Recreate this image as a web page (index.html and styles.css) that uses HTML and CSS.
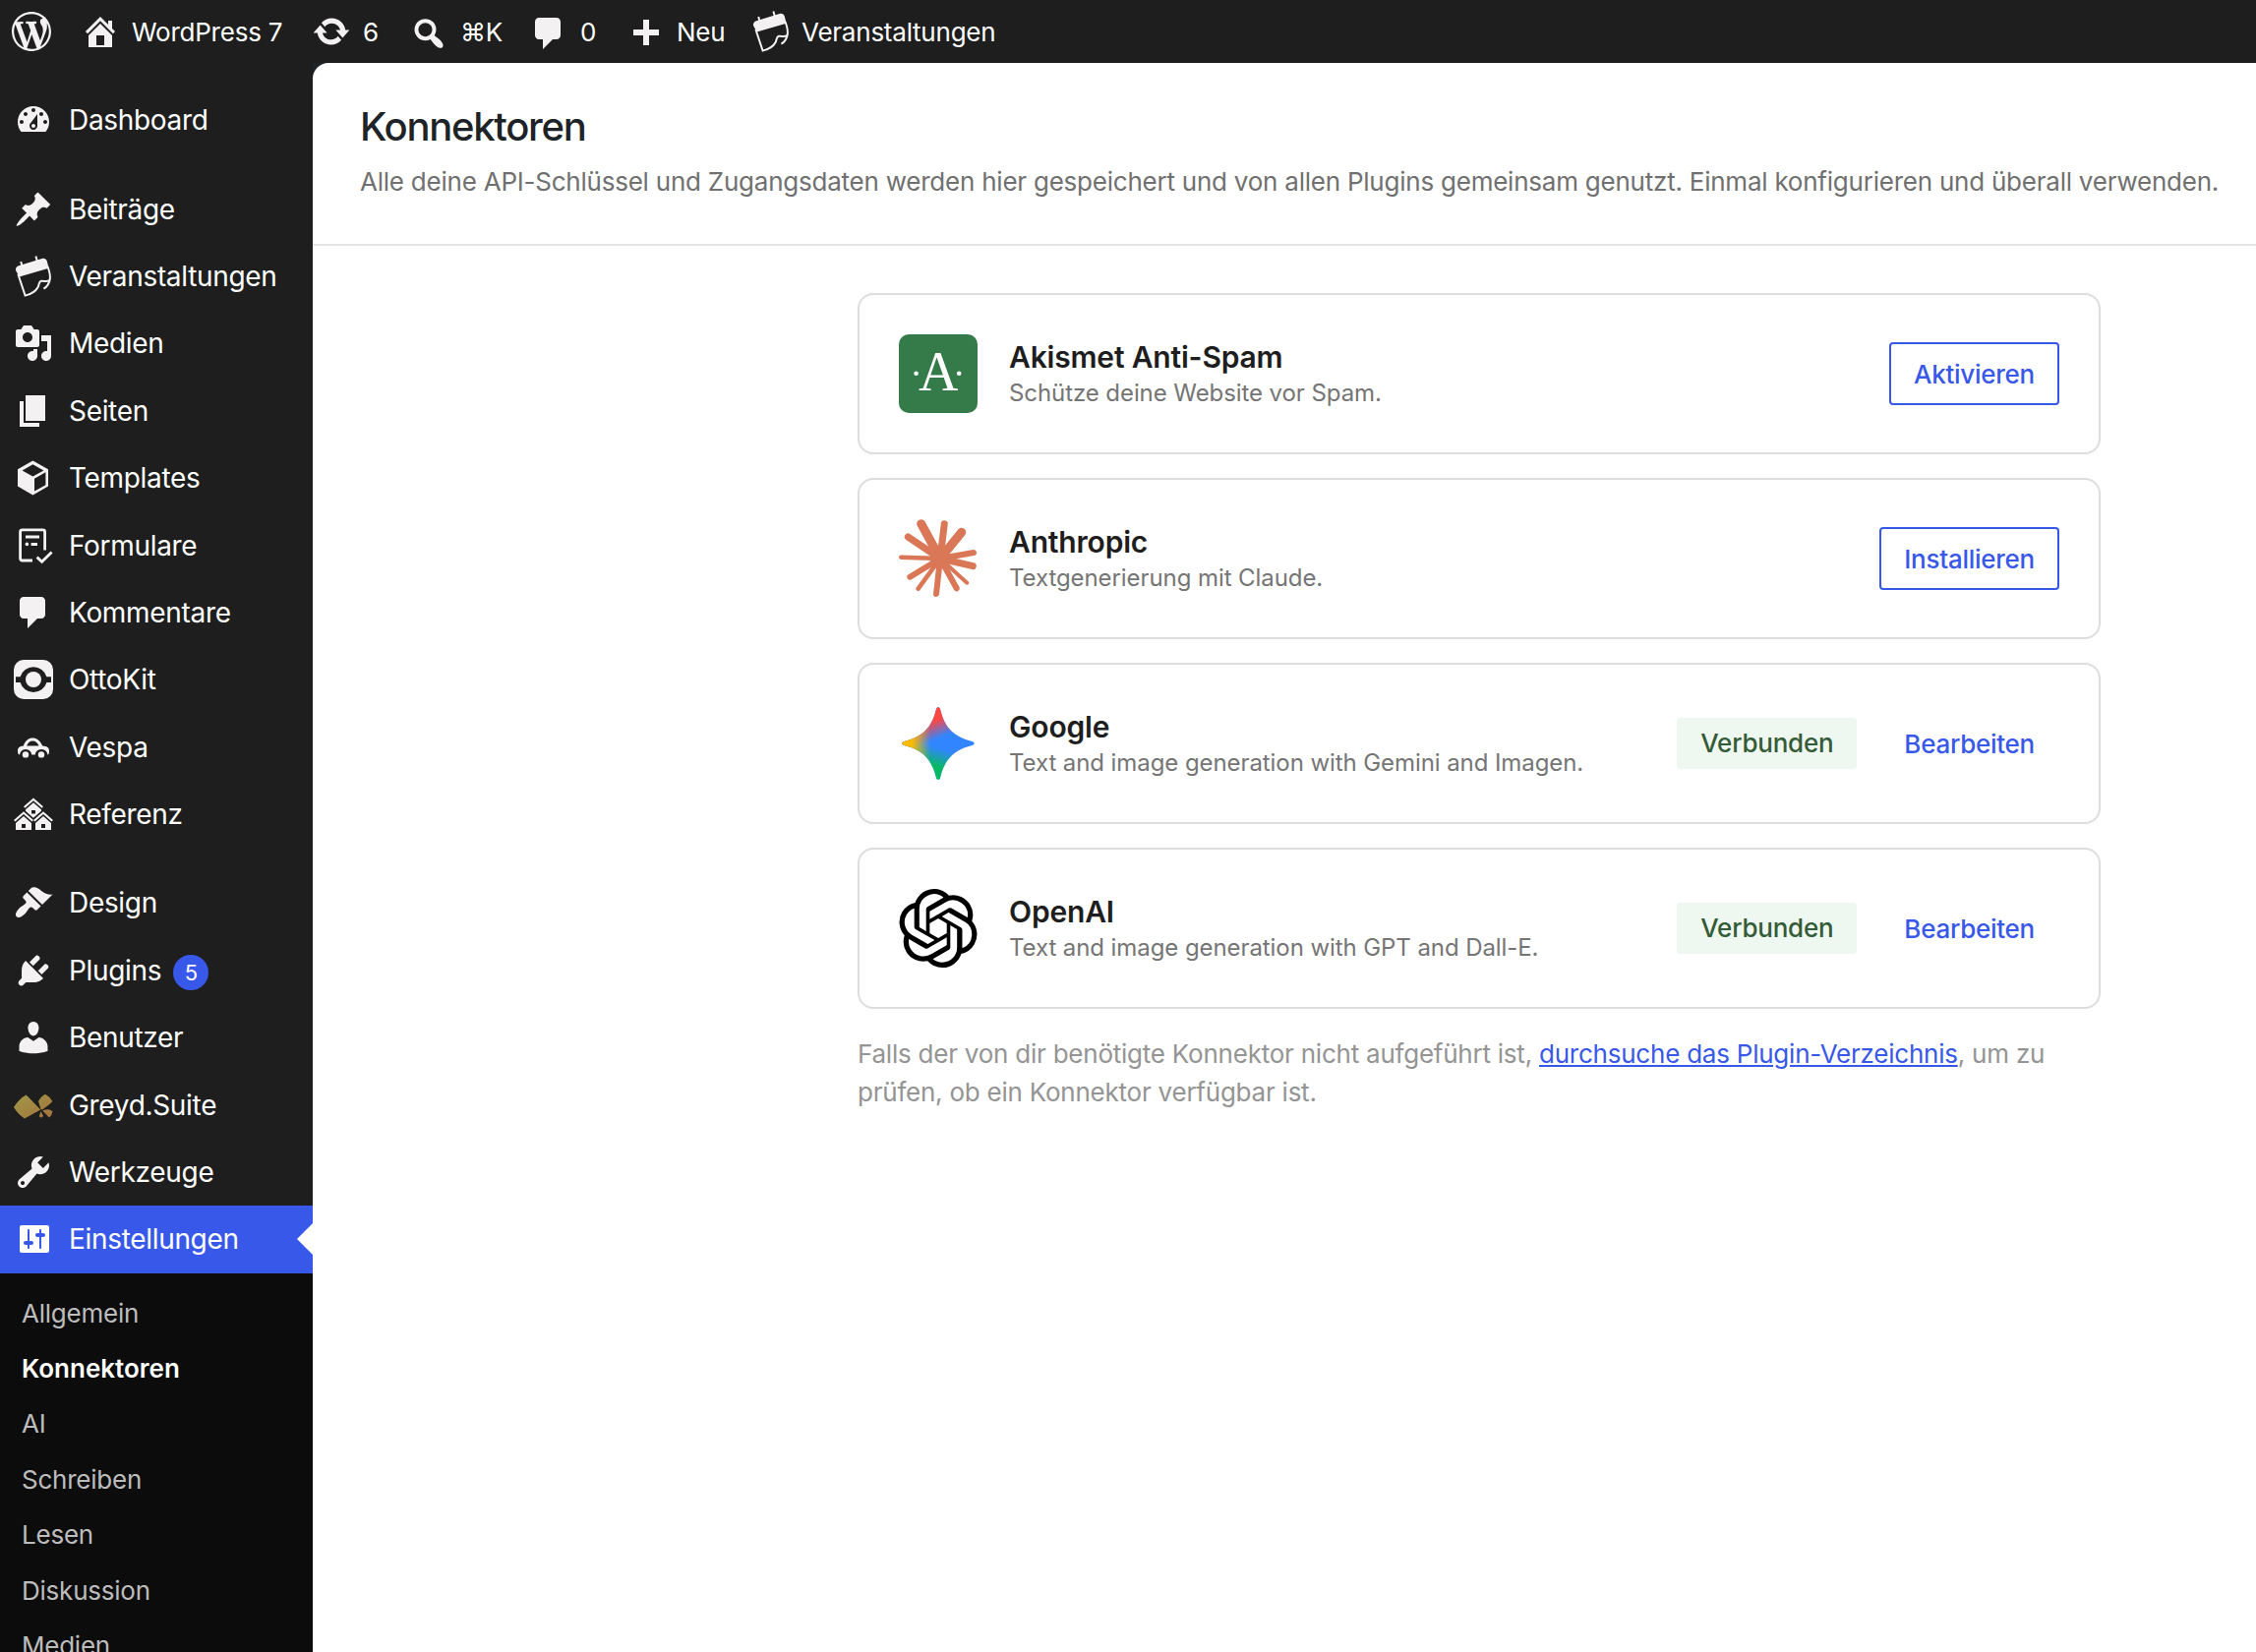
FILE: index.html
```html
<!DOCTYPE html>
<html lang="de">
<head>
  <meta charset="UTF-8">
  <meta name="viewport" content="width=device-width, initial-scale=1.0">
  <title>Konnektoren</title>
  <link rel="stylesheet" href="styles.css">
</head>
<body>
  <!-- Shared icons -->
  <svg class="sprite">
    <symbol id="calendar" viewBox="0 0 20 20" overflow="visible">
      <path d="M1 7C.8 6 1.300 5 2.500 4.600L14.300 1c1.300-.4 2.200.1 2.600 1.300L17.800 5.900 2.800 10.200z"/>
      <path d="M3.600 2.500L4.300 5M11.200-.3l.7 2.500M2.200 9l3.600 10.800c3.200-.8 5.200-1.800 6.500-4.300.7-1.700.4-2.700 1.700-3.100 1.500-.3 3 .9 4.300-.6.5-2.300-.3-4.800-1.100-6.800M18.500 11c-.5 3-1.700 4.500-3.300 5.300" fill="none" stroke="currentColor"/>
    </symbol>
    <symbol id="comment" viewBox="0 0 20 20">
      <path d="M5 2h9c1.100 0 2 .9 2 2v7c0 1.100-.9 2-2 2h-2l-5 5v-5H5c-1.100 0-2-.9-2-2V4c0-1.100.9-2 2-2z"/>
    </symbol>
  </svg>

  <!-- Admin bar -->
  <header class="admin-bar">
    <a class="bar-item bar-logo"><svg class="icon" viewBox="0 0 20 20"><path d="M20 10c0-5.510-4.490-10-10-10C4.480 0 0 4.490 0 10c0 5.520 4.480 10 10 10 5.510 0 10-4.480 10-10zM7.780 15.370L4.370 6.220c.55-.02 1.170-.08 1.170-.08.5-.06.44-1.130-.06-1.110 0 0-1.450.11-2.370.11-.18 0-.37 0-.58-.01C4.120 2.690 6.870 1.110 10 1.110c2.330 0 4.450.87 6.050 2.340-.68-.11-1.650.39-1.650 1.580 0 .74.45 1.360.9 2.100.35.61.55 1.360.55 2.460 0 1.490-1.400 5-1.400 5l-3.030-8.370c.54-.02.82-.17.82-.17.5-.05.44-1.250-.06-1.220 0 0-1.440.12-2.380.12-.87 0-2.330-.12-2.330-.12-.5-.03-.56 1.200-.06 1.220l.92.08 1.260 3.410zM17.410 10c.24-.64.74-1.870.43-4.250.7 1.290 1.050 2.710 1.050 4.250 0 3.290-1.730 6.240-4.400 7.780.97-2.590 1.940-5.200 2.920-7.780zM6.100 18.090C3.120 16.650 1.110 13.530 1.110 10c0-1.300.23-2.480.72-3.590C3.250 10.300 4.670 14.200 6.100 18.090zm4.030-6.630l2.580 6.980c-.86.29-1.760.45-2.710.45-.79 0-1.570-.11-2.290-.33.81-2.380 1.620-4.740 2.420-7.100z"/></svg></a>
    <a class="bar-item bar-site"><svg class="icon" viewBox="0 0 20 20"><path d="M16 8.500l1.530 1.530-1.060 1.060L10 4.600l-6.470 6.490-1.060-1.060L10 2.500l4 4v-2h2v4zm-6-2.460l6 5.990V18H4v-5.970zM12 17v-5H8v5h4z"/></svg><span>WordPress 7</span></a>
    <a class="bar-item bar-updates"><svg class="icon" viewBox="0 0 20 20"><path d="M10.200 3.280c3.530 0 6.430 2.610 6.920 6h2.080l-3.500 4-3.500-4h2.320c-.45-1.970-2.210-3.450-4.320-3.450-1.450 0-2.730.71-3.540 1.780L4.950 5.660C6.230 4.200 8.110 3.280 10.200 3.280zm-.4 13.440c-3.520 0-6.430-2.610-6.920-6H.8l3.500-4c1.170 1.330 2.330 2.670 3.500 4H5.480c.45 1.970 2.210 3.450 4.320 3.450 1.450 0 2.730-.71 3.540-1.780l1.710 1.950c-1.280 1.460-3.150 2.380-5.250 2.380z"/></svg><span>6</span></a>
    <a class="bar-item bar-search"><svg class="icon" viewBox="0 0 20 20"><path d="M12.140 4.180c1.870 1.870 2.110 4.750.72 6.890.12.1.22.21.36.31.2.16.47.36.81.59.34.24.56.39.66.47.42.31.73.57.94.78.32.32.6.65.84 1 .25.35.44.69.59 1.040.14.35.21.68.18 1-.02.32-.14.59-.36.81s-.49.34-.81.36c-.31.02-.65-.04-.99-.19-.35-.14-.7-.34-1.040-.59-.35-.24-.68-.52-1-.84-.21-.21-.47-.52-.77-.93-.1-.13-.25-.35-.47-.66-.22-.32-.4-.57-.56-.78-.16-.2-.29-.35-.44-.5-2.070 1.090-4.690.76-6.440-.98-2.140-2.150-2.140-5.640 0-7.780 2.150-2.150 5.630-2.150 7.780 0zm-1.410 6.360c1.360-1.370 1.360-3.580 0-4.950-1.370-1.370-3.590-1.370-4.950 0-1.370 1.370-1.370 3.580 0 4.950 1.360 1.370 3.580 1.370 4.950 0z"/></svg><span>⌘K</span></a>
    <a class="bar-item bar-comments"><svg class="icon"><use href="#comment"/></svg><span>0</span></a>
    <a class="bar-item bar-new"><svg class="icon" viewBox="0 0 20 20"><path d="M17 7v3h-5v5H9v-5H4V7h5V2h3v5h5z"/></svg><span>Neu</span></a>
    <a class="bar-item bar-events"><svg class="icon"><use href="#calendar"/></svg><span>Veranstaltungen</span></a>
  </header>

  <div class="layout">
    <!-- Sidebar -->
    <nav class="sidebar">
      <a class="menu-item"><svg class="icon" viewBox="0 0 20 20"><path d="M3.760 16h12.480c1.100-1.370 1.760-3.110 1.760-5 0-4.420-3.580-8-8-8s-8 3.580-8 8c0 1.890.66 3.630 1.760 5zM10 4c.55 0 1 .45 1 1s-.45 1-1 1-1-.45-1-1 .45-1 1-1zM6 6c.55 0 1 .45 1 1s-.45 1-1 1-1-.45-1-1 .45-1 1-1zm8 0c.55 0 1 .45 1 1s-.45 1-1 1-1-.45-1-1 .45-1 1-1zm-5.370 5.550L12 7v6c0 1.100-.9 2-2 2s-2-.9-2-2c0-.57.24-1.080.63-1.450zM4 10c.55 0 1 .45 1 1s-.45 1-1 1-1-.45-1-1 .45-1 1-1zm12 0c.55 0 1 .45 1 1s-.45 1-1 1-1-.45-1-1 .45-1 1-1zm-5 3c0-.55-.45-1-1-1s-1 .45-1 1 .45 1 1 1 1-.45 1-1z"/></svg><span>Dashboard</span></a>
      <div class="separator"></div>
      <a class="menu-item"><svg class="icon" viewBox="0 0 20 20"><path d="M10.440 3.020l1.820-1.820 6.360 6.350-1.830 1.820c-1.050-.68-2.480-.57-3.410.36l-.75.75c-.92.93-1.040 2.350-.35 3.410l-1.830 1.820-2.410-2.410-2.800 2.790c-.42.42-3.380 2.710-3.800 2.290s1.860-3.390 2.280-3.810l2.790-2.790L4.100 9.360l1.830-1.820c1.050.69 2.480.57 3.400-.36l.75-.75c.93-.92 1.050-2.350.36-3.410z"/></svg><span>Beiträge</span></a>
      <a class="menu-item"><svg class="icon"><use href="#calendar"/></svg><span>Veranstaltungen</span></a>
      <a class="menu-item"><svg class="icon" viewBox="0 0 20 20"><path d="M13 11V4c0-.55-.45-1-1-1h-1.670L9 1H5L3.670 3H2c-.55 0-1 .45-1 1v7c0 .55.45 1 1 1h10c.55 0 1-.45 1-1zM7 4.500c1.380 0 2.500 1.120 2.500 2.500S8.380 9.500 7 9.500 4.500 8.380 4.500 7 5.620 4.500 7 4.500zM14 6h5v10.500c0 1.380-1.120 2.500-2.500 2.500S14 17.880 14 16.500s1.120-2.500 2.500-2.500c.17 0 .34.02.5.05V9h-3V6zm-4 8.050V13h2v3.500c0 1.380-1.120 2.500-2.500 2.500S7 17.880 7 16.500 8.120 14 9.500 14c.17 0 .34.02.5.05z"/></svg><span>Medien</span></a>
      <a class="menu-item"><svg class="icon" viewBox="0 0 20 20"><path d="M6 15V2h10v13H6zm-1 1h8v2H3V5h2v11z"/></svg><span>Seiten</span></a>
      <a class="menu-item"><svg class="icon" viewBox="0 0 20 20"><path fill-rule="evenodd" d="M9.700 1.200l7.800 4.400v8.700l-7.800 4.500L2 14.300V5.600zM4.300 6.200l5.400 3.100 5.500-3.100-5.500-3.100zM10.500 10.400v6.400l5.700-3.200V7.100z"/></svg><span>Templates</span></a>
      <a class="menu-item"><svg class="icon" viewBox="0 0 20 20"><path d="M9.500 17.500H4.300c-.6 0-1-.4-1-1V2.900c0-.6.4-1 1-1h10.500c.6 0 1 .4 1 1v9.300" fill="none" stroke="currentColor" stroke-width="1.400"/><path d="M6 4.800h7v1.500H6zM8.800 8.500h3.200V10H8.800z"/><circle cx="6.700" cy="9.200" r=".9"/><path d="M11.800 15.800l2.500 2.300 5-4.900" fill="none" stroke="currentColor" stroke-width="1.400"/></svg><span>Formulare</span></a>
      <a class="menu-item"><svg class="icon"><use href="#comment"/></svg><span>Kommentare</span></a>
      <a class="menu-item"><svg class="icon" viewBox="0 0 20 20"><rect width="20" height="20" rx="5"/><path class="cut" d="M1 8.600h2.300a7 7 0 0 1 13.400 0H19v2.900h-2.300a7 7 0 0 1-13.400 0H1z"/><circle cx="10" cy="10" r="4"/></svg><span>OttoKit</span></a>
      <a class="menu-item"><svg class="icon" viewBox="0 0 20 20"><path fill-rule="evenodd" d="M4.900 9.200C6 6.500 7.500 5.300 9.600 5.300s3.600 1.200 5 3.900c2.300.1 3.400.9 3.400 2.500 0 1.300-.2 1.900-.8 2-.2-1.600-1.500-2.700-3.100-2.700-1.800 0-3.100 1.200-3.200 2.800H9.100C9 12.200 7.700 11 6 11c-1.600 0-2.600 1-3 2.700-.7-.1-1-.7-1-2 0-1.500.9-2.400 2.900-2.500zm1.700 0h6.200c-.8-1.700-1.800-2.500-3.200-2.500s-2.300.8-3 2.500z"/><circle cx="6" cy="13.700" r="1.600"/><circle cx="14" cy="13.700" r="1.600"/></svg><span>Vespa</span></a>
      <a class="menu-item"><svg class="icon" viewBox="0 0 20 20"><path d="M14.270 6.870L10 3.140 5.730 6.870 5 6.140l5-4.380 5 4.380zM14 8.420l-4.050 3.430L6 8.380v-.74l4-3.500 4 3.500v.78zM11 9.700V8H9v1.700h2zm-1.730 4.030L5 10 .73 13.730 0 13l5-4.380L10 13zm10 0L15 10l-4.270 3.730L10 13l5-4.380L20 13zM5 11l4 3.500V18H1v-3.500zm10 0l4 3.500V18h-8v-3.500zm-9 6v-2H4v2h2zm10 0v-2h-2v2h2z"/></svg><span>Referenz</span></a>
      <div class="separator"></div>
      <a class="menu-item"><svg class="icon" viewBox="0 0 20 20"><path d="M14.480 11.060L7.410 3.990l1.500-1.500c.5-.56 2.300-.47 3.510.32 1.210.8 1.430 1.280 2.910 2.100 1.180.64 2.450 1.260 4.450.85zm-.71.71L6.700 4.700 4.930 6.470c-.39.39-.39 1.020 0 1.410l1.060 1.060c.39.39.39 1.030 0 1.420-.6.6-1.430 1.110-2.210 1.690-.35.26-.7.53-1.010.84C1.430 14.230.4 16.080 1.400 17.070c.99 1 2.840-.03 4.180-1.360.31-.31.58-.66.85-1.020.57-.78 1.080-1.610 1.690-2.210.39-.39 1.020-.39 1.410 0l1.060 1.060c.39.39 1.020.39 1.410 0z"/></svg><span>Design</span></a>
      <a class="menu-item"><svg class="icon" viewBox="0 0 20 20"><path d="M13.110 4.360L9.870 7.600 8 5.730l3.240-3.240c.35-.34 1.050-.2 1.560.32.52.51.66 1.210.31 1.550zm-8 1.770l.91-1.120 9.010 9.010-1.190.84c-.71.71-2.630 1.160-3.820 1.160H6.140L4.900 17.260c-.59.59-1.540.59-2.120 0-.59-.58-.59-1.530 0-2.120l1.240-1.240v-3.880c0-1.130.4-3.190 1.090-3.890zm7.260 3.970l3.240-3.240c.34-.35 1.040-.21 1.550.31.52.51.66 1.210.31 1.550l-3.240 3.250z"/></svg><span>Plugins</span><span class="count">5</span></a>
      <a class="menu-item"><svg class="icon" viewBox="0 0 20 20"><path d="M10 9.250c-2.270 0-2.730-3.440-2.730-3.440C7 4.020 7.820 2 9.970 2c2.160 0 2.980 2.020 2.710 3.810 0 0-.41 3.440-2.680 3.440zm0 2.570L12.720 10c2.390 0 4.520 2.330 4.520 4.530v2.490s-3.650 1.130-7.240 1.130c-3.650 0-7.240-1.130-7.240-1.130v-2.490c0-2.250 1.940-4.480 4.470-4.480z"/></svg><span>Benutzer</span></a>
      <a class="menu-item"><svg class="icon" viewBox="0 0 40 40"><defs><linearGradient id="gold" x1="0" y1="0" x2="1" y2="1"><stop offset="0" stop-color="#a09a48"/><stop offset="1" stop-color="#a5713c"/></linearGradient></defs><path fill="url(#gold)" d="M0 22Q5.500 13 12.700 9.400L27.300 24.400 11 33.400Q4.500 29.500 0 22zM32 8.700Q36.500 11 39.300 16Q38 18 29 24.500L27.500 24 25 16Q27 11.500 32 8.700zM29.300 25.600Q35.500 22.800 39.500 26.200 39 30 36 32.500zM27.600 26L30 31 28 32.700 25.800 31.200z"/></svg><span>Greyd.Suite</span></a>
      <a class="menu-item"><svg class="icon" viewBox="0 0 20 20"><path d="M16.680 9.770c-1.340 1.340-3.300 1.670-4.950.99l-5.410 6.520c-.99.99-2.590.99-3.580 0s-.99-2.590 0-3.570l6.520-5.420c-.68-1.650-.35-3.610.99-4.950 1.280-1.280 3.120-1.620 4.720-1.060l-2.890 2.890 2.820 2.820 2.860-2.870c.53 1.580.18 3.390-1.080 4.650zM3.810 16.210c.4.39 1.040.39 1.430 0 .4-.4.4-1.040 0-1.430-.39-.4-1.030-.4-1.430 0-.39.39-.39 1.030 0 1.430z"/></svg><span>Werkzeuge</span></a>
      <a class="menu-item current"><svg class="icon" viewBox="0 0 20 20"><path d="M18 16V4c0-.55-.45-1-1-1H4c-.55 0-1 .45-1 1v12c0 .55.45 1 1 1h13c.55 0 1-.45 1-1zM8 11h1c.55 0 1 .45 1 1s-.45 1-1 1H8v1.500c0 .28-.22.5-.5.5s-.5-.22-.5-.5V13H6c-.55 0-1-.45-1-1s.45-1 1-1h1V5.500c0-.28.22-.5.5-.5s.5.22.5.5V11zm5-2h-1c-.55 0-1-.45-1-1s.45-1 1-1h1V5.500c0-.28.22-.5.5-.5s.5.22.5.5V7h1c.55 0 1 .45 1 1s-.45 1-1 1h-1v5.500c0 .28-.22.5-.5.5s-.5-.22-.5-.5V9z"/></svg><span>Einstellungen</span></a>
      <div class="submenu">
        <a>Allgemein</a>
        <a class="active">Konnektoren</a>
        <a>AI</a>
        <a>Schreiben</a>
        <a>Lesen</a>
        <a>Diskussion</a>
        <a>Medien</a>
      </div>
    </nav>

    <!-- Page content -->
    <main class="content">
      <div class="page-header">
        <h1>Konnektoren</h1>
        <p>Alle deine API-Schlüssel und Zugangsdaten werden hier gespeichert und von allen Plugins gemeinsam genutzt. Einmal konfigurieren und überall verwenden.</p>
      </div>

      <div class="connectors">
        <div class="card">
          <svg class="logo" viewBox="0 0 80 80"><rect width="80" height="80" rx="10" fill="#357b49"/><text class="logo-letter" x="40" y="57" text-anchor="middle">A</text><circle cx="17.600" cy="39.700" r="2.300" fill="#fff"/><circle cx="61.200" cy="39.700" r="2.300" fill="#fff"/></svg>
          <div class="info">
            <h2>Akismet Anti-Spam</h2>
            <p>Schütze deine Website vor Spam.</p>
          </div>
          <button class="btn">Aktivieren</button>
        </div>

        <div class="card">
          <svg class="logo" viewBox="0 0 80 80"><circle cx="42" cy="40" r="10.500" fill="#d97757"/><g stroke="#d97757" stroke-linecap="round" fill="none"><path stroke-width="9" d="M42 40L22.700 4.700M42 40L63.700 13.300"/><path stroke-width="7" d="M42 40L9.300 18M42 40L46.300 4.700M42 40L75.300 47.700"/><path stroke-width="6" d="M42 40L76 34M42 40L58.700 70.300M42 40L38 76M42 40L11.300 58.700"/><path stroke-width="4.600" d="M42 40L2.300 38.700M42 40L19.700 70.700"/><path stroke-width="4" d="M42 40L69.300 64.700"/></g></svg>
          <div class="info">
            <h2>Anthropic</h2>
            <p>Textgenerierung mit Claude.</p>
          </div>
          <button class="btn">Installieren</button>
        </div>

        <div class="card">
          <svg class="logo" viewBox="0 0 80 80">
            <defs>
              <linearGradient id="spark-red" x1="36" y1="10" x2="45" y2="33" gradientUnits="userSpaceOnUse"><stop offset="0" stop-color="#ff4641"/><stop offset=".25" stop-color="#ff4641"/><stop offset="1" stop-color="#ff4641" stop-opacity="0"/></linearGradient>
              <linearGradient id="spark-yellow" x1="3" y1="40" x2="32" y2="40" gradientUnits="userSpaceOnUse"><stop offset="0" stop-color="#fbbc04"/><stop offset=".35" stop-color="#fbbc04"/><stop offset="1" stop-color="#fbbc04" stop-opacity="0"/></linearGradient>
              <linearGradient id="spark-green" x1="37" y1="72" x2="45" y2="46" gradientUnits="userSpaceOnUse"><stop offset="0" stop-color="#08b962"/><stop offset=".3" stop-color="#08b962"/><stop offset="1" stop-color="#08b962" stop-opacity="0"/></linearGradient>
              <path id="spark" d="M40 3.300C41.400 3.300 41.800 4.300 42.100 5.600C46.500 24 56 33.500 74.600 38Q76.700 38.500 76.700 40Q76.700 41.500 74.600 42C56 46.500 46.500 56 42.100 74.400C41.800 75.700 41.400 76.700 40 76.700C38.600 76.700 38.200 75.700 37.900 74.400C33.500 56 24 46.500 5.400 42Q3.300 41.500 3.300 40Q3.300 38.500 5.400 38C24 33.500 33.500 24 37.900 5.600C38.200 4.300 38.600 3.300 40 3.300z"/>
            </defs>
            <use href="#spark" fill="#3186ff"/>
            <use href="#spark" fill="url(#spark-green)"/>
            <use href="#spark" fill="url(#spark-red)"/>
            <use href="#spark" fill="url(#spark-yellow)"/>
          </svg>
          <div class="info">
            <h2>Google</h2>
            <p>Text and image generation with Gemini and Imagen.</p>
          </div>
          <span class="status">Verbunden</span>
          <button class="btn btn-link">Bearbeiten</button>
        </div>

        <div class="card">
          <svg class="logo" viewBox="0 0 24 24"><path d="M22.2819 9.8211a5.9847 5.9847 0 0 0-.5157-4.9108 6.0462 6.0462 0 0 0-6.5098-2.9A6.0651 6.0651 0 0 0 4.9807 4.1818a5.9847 5.9847 0 0 0-3.9977 2.9 6.0462 6.0462 0 0 0 .7427 7.0966 5.98 5.98 0 0 0 .511 4.9107 6.051 6.051 0 0 0 6.5146 2.9001A5.9847 5.9847 0 0 0 13.2599 24a6.0557 6.0557 0 0 0 5.7718-4.2058 5.9894 5.9894 0 0 0 3.9977-2.9001 6.0557 6.0557 0 0 0-.7475-7.0729zm-9.022 12.6081a4.4755 4.4755 0 0 1-2.8764-1.0408l.1419-.0804 4.7783-2.7582a.7948.7948 0 0 0 .3927-.6813v-6.7369l2.02 1.1686a.071.071 0 0 1 .038.052v5.5826a4.504 4.504 0 0 1-4.4945 4.4944zm-9.6607-4.1254a4.4708 4.4708 0 0 1-.5346-3.0137l.142.0852 4.783 2.7582a.7712.7712 0 0 0 .7806 0l5.8428-3.3685v2.3324a.0804.0804 0 0 1-.0332.0615L9.74 19.9502a4.4992 4.4992 0 0 1-6.1408-1.6464zM2.3408 7.8956a4.485 4.485 0 0 1 2.3655-1.9728V11.6a.7664.7664 0 0 0 .3879.6765l5.8144 3.3543-2.0201 1.1685a.0757.0757 0 0 1-.071 0l-4.8303-2.7865A4.504 4.504 0 0 1 2.3408 7.872zm16.5963 3.8558L13.1038 8.364 15.1192 7.2a.0757.0757 0 0 1 .071 0l4.8303 2.7913a4.4944 4.4944 0 0 1-.6765 8.1042v-5.6772a.79.79 0 0 0-.407-.667zm2.0107-3.0231l-.142-.0852-4.7735-2.7818a.7759.7759 0 0 0-.7854 0L9.409 9.2297V6.8974a.0662.0662 0 0 1 .0284-.0615l4.8303-2.7866a4.4992 4.4992 0 0 1 6.6802 4.66zM8.3065 12.863l-2.02-1.1638a.0804.0804 0 0 1-.038-.0567V6.0742a4.4992 4.4992 0 0 1 7.3757-3.4537l-.142.0805L8.704 5.459a.7948.7948 0 0 0-.3927.6813zm1.0976-2.3654l2.602-1.4998 2.6069 1.4998v2.9994l-2.5974 1.4997-2.6067-1.4997Z"/></svg>
          <div class="info">
            <h2>OpenAI</h2>
            <p>Text and image generation with GPT and Dall-E.</p>
          </div>
          <span class="status">Verbunden</span>
          <button class="btn btn-link">Bearbeiten</button>
        </div>

        <p class="hint">Falls der von dir benötigte Konnektor nicht aufgeführt ist, <a>durchsuche das Plugin-Verzeichnis</a>, um zu<br>prüfen, ob ein Konnektor verfügbar ist.</p>
      </div>
    </main>
  </div>
</body>
</html>
```
FILE: styles.css
```css
* {
  box-sizing: border-box;
}

body {
  margin: 0;
  height: 1680px;
  overflow: hidden;
  background: #1d2327;
  font-family: Inter, "Liberation Sans", sans-serif;
  font-size: 26px;
  letter-spacing: -0.23px;
}

h1,
h2,
p {
  margin: 0;
}

.sprite {
  display: none;
}

.icon {
  width: 40px;
  height: 40px;
  flex: none;
  overflow: visible;
  color: #f3f1f1;
  fill: currentColor;
}

/* Admin bar */
.admin-bar {
  display: flex;
  align-items: center;
  height: 64px;
  padding-left: 12px;
  background: #1e1e1e;
  color: #fff;
}

.bar-item {
  display: flex;
  align-items: center;
  flex: none;
  white-space: nowrap;
}

.bar-logo {
  width: 70px;
}

.bar-site {
  width: 235px;
  gap: 12px;
}

.bar-updates {
  width: 99px;
  gap: 12px;
}

.bar-search {
  width: 122px;
  gap: 12px;
}

.bar-comments {
  width: 98px;
  gap: 12px;
}

.bar-new {
  width: 128px;
  gap: 12px;
}

.bar-events {
  gap: 11px;
}

.bar-search .icon,
.bar-comments .icon {
  margin-top: 3px;
}

.bar-new .icon {
  margin-top: 7px;
}

/* Sidebar */
.layout {
  display: flex;
  height: 1616px;
}

.sidebar {
  width: 318px;
  flex: none;
  padding-top: 24px;
  background: #1e1e1e;
  overflow: hidden;
}

.menu-item {
  display: flex;
  align-items: center;
  position: relative;
  height: 68.4px;
  padding-left: 14px;
  color: #fff;
  font-size: 28px;
  letter-spacing: -0.32px;
}

.menu-item .icon {
  margin-right: 16px;
}

.menu-item .cut {
  fill: #1e1e1e;
}

.separator {
  height: 22px;
}

.count {
  width: 36px;
  height: 36px;
  margin: 4px 0 0 12px;
  border-radius: 50%;
  background: #3858e9;
  font-size: 22px;
  line-height: 36px;
  text-align: center;
}

.current {
  background: #3858e9;
}

.current .icon {
  color: #fff;
}

.current::after {
  content: "";
  position: absolute;
  right: 0;
  top: 18px;
  border: 16px solid transparent;
  border-left: 0;
  border-right-color: #fff;
}

.submenu {
  height: 500px;
  padding: 13px 22px;
  background: #0c0c0c;
}

.submenu a {
  display: block;
  height: 56.4px;
  line-height: 56.4px;
  color: #bcbcbc;
}

.submenu .active {
  color: #fff;
  font-weight: 600;
  letter-spacing: 0;
}

/* Content */
.content {
  flex: 1;
  min-width: 0;
  background: #fff;
  border-top-left-radius: 16px;
}

.page-header {
  height: 186px;
  padding: 41px 0 0 48px;
  border-bottom: 2px solid #e4e4e4;
  white-space: nowrap;
}

.page-header h1 {
  color: #1d2327;
  font-size: 40px;
  font-weight: 500;
  line-height: 48px;
  letter-spacing: -1.3px;
}

.page-header p {
  margin-top: 12px;
  color: #707070;
  line-height: 40px;
}

.connectors {
  display: flex;
  flex-direction: column;
  gap: 24px;
  width: 1264px;
  margin: 48px 0 0 554px;
}

.card {
  display: flex;
  align-items: center;
  height: 164px;
  padding: 0 40px;
  border: 2px solid #ddd;
  border-radius: 16px;
}

.logo {
  width: 80px;
  height: 80px;
  flex: none;
}

.logo-letter {
  fill: #fff;
  font-family: "Liberation Serif", serif;
  font-size: 56px;
}

.info {
  flex: 1;
  margin-left: 32px;
}

.info h2 {
  color: #1e1e1e;
  font-size: 30px;
  font-weight: 600;
  line-height: 40px;
  letter-spacing: -0.18px;
}

.info p {
  margin: 1px 0 1px;
  color: #757575;
  font-size: 24px;
  line-height: 32px;
  letter-spacing: -0.08px;
}

.btn {
  height: 64px;
  padding: 0 23px;
  border: 2px solid #3858e9;
  border-radius: 4px;
  background: none;
  color: #3858e9;
  font-family: inherit;
  font-size: 26px;
  font-weight: 500;
  letter-spacing: -0.26px;
}

.btn-link {
  border-color: transparent;
}

.status {
  height: 52px;
  margin-right: 23px;
  padding: 0 24px;
  border-radius: 4px;
  background: #eef7f0;
  color: #345b37;
  font-weight: 500;
  line-height: 52px;
}

.hint {
  margin-top: 2px;
  color: #949494;
  line-height: 39px;
  white-space: nowrap;
}

.hint a {
  color: #3858e9;
  text-decoration: underline;
}
```
